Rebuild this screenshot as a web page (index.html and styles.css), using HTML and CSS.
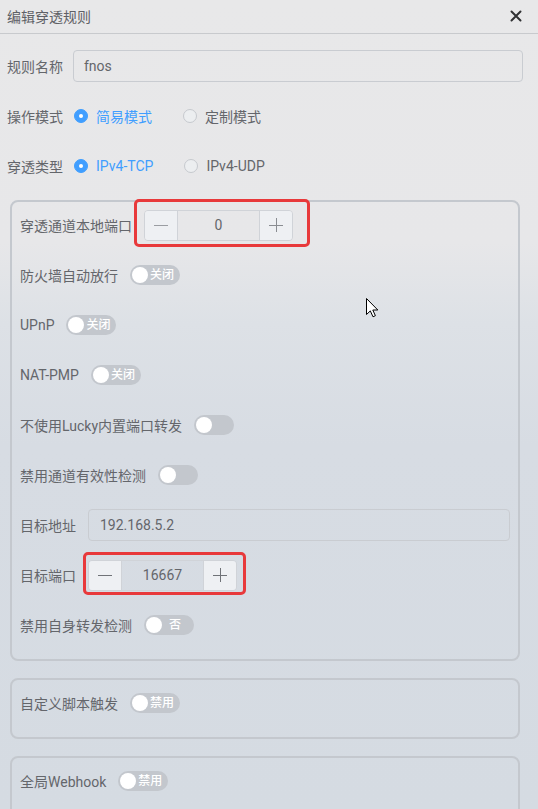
FILE: index.html
```html
<!DOCTYPE html>
<html lang="zh-CN">
<head>
<meta charset="utf-8">
<title>编辑穿透规则</title>
<link rel="stylesheet" href="styles.css">
</head>
<body>
<div class="dialog">
  <header class="hd">
    <span class="title">编辑穿透规则</span>
    <span class="close"><svg width="12" height="12" viewBox="0 0 12 12"><path d="M1.5 1.5L10.5 10.5M10.5 1.5L1.5 10.5" stroke="#303133" stroke-width="2" stroke-linecap="round"/></svg></span>
  </header>
  <div class="body">
    <div class="row top">
      <span class="lbl">规则名称</span>
      <div class="input wide">fnos</div>
    </div>
    <div class="row top">
      <span class="lbl">操作模式</span>
      <span class="radio on"><i></i>简易模式</span>
      <span class="radio"><i></i>定制模式</span>
    </div>
    <div class="row top">
      <span class="lbl">穿透类型</span>
      <span class="radio on"><i></i>IPv4-TCP</span>
      <span class="radio"><i></i>IPv4-UDP</span>
    </div>

    <div class="panel">
      <div class="row">
        <span class="lbl">穿透通道本地端口</span>
        <div class="stepper mark1">
          <span class="btn"><svg width="14" height="14" viewBox="0 0 14 14"><path d="M0 7.5H14" stroke="#9a9da2" stroke-width="1"/></svg></span><span class="val">0</span><span class="btn"><svg width="14" height="14" viewBox="0 0 14 14"><path d="M0 7.5H14M7.5 0V14" stroke="#8a8d92" stroke-width="1"/></svg></span>
        </div>
      </div>
      <div class="row">
        <span class="lbl">防火墙自动放行</span>
        <span class="switch txt"><b></b><em>关闭</em></span>
      </div>
      <div class="row">
        <span class="lbl">UPnP</span>
        <span class="switch txt"><b></b><em>关闭</em></span>
      </div>
      <div class="row">
        <span class="lbl">NAT-PMP</span>
        <span class="switch txt"><b></b><em>关闭</em></span>
      </div>
      <div class="row">
        <span class="lbl">不使用Lucky内置端口转发</span>
        <span class="switch"><b></b></span>
      </div>
      <div class="row">
        <span class="lbl">禁用通道有效性检测</span>
        <span class="switch"><b></b></span>
      </div>
      <div class="row">
        <span class="lbl">目标地址</span>
        <div class="input wide addr">192.168.5.2</div>
      </div>
      <div class="row">
        <span class="lbl">目标端口</span>
        <div class="stepper mark2">
          <span class="btn"><svg width="14" height="14" viewBox="0 0 14 14"><path d="M0 7.5H14" stroke="#6f7277" stroke-width="1"/></svg></span><span class="val">16667</span><span class="btn"><svg width="14" height="14" viewBox="0 0 14 14"><path d="M0 7.5H14M7.5 0V14" stroke="#6f7277" stroke-width="1"/></svg></span>
        </div>
      </div>
      <div class="row">
        <span class="lbl">禁用自身转发检测</span>
        <span class="switch txt"><b></b><em class="c">否</em></span>
      </div>
    </div>

    <div class="panel">
      <div class="row">
        <span class="lbl">自定义脚本触发</span>
        <span class="switch txt"><b></b><em>禁用</em></span>
      </div>
    </div>

    <div class="panel">
      <div class="row">
        <span class="lbl">全局Webhook</span>
        <span class="switch txt"><b></b><em>禁用</em></span>
      </div>
    </div>
  </div>
</div>
<svg class="cursor" width="13" height="20" viewBox="0 0 13 20"><path d="M0.5 0.5V16.5L4.3 12.9L7 18.8L9.4 17.7L6.8 12H11.8Z" fill="#fff" stroke="#000" stroke-width="1" stroke-linejoin="miter"/></svg>
</body>
</html>
```

FILE: styles.css
```css
* { box-sizing: border-box; }
html, body { margin: 0; padding: 0; }
body {
  width: 538px;
  height: 809px;
  overflow: hidden;
  font-family: Roboto, "Noto Sans CJK SC", sans-serif;
  font-size: 14px;
  color: #64666b;
  background: linear-gradient(180deg, #e8e8e9 0%, #e7e7e9 30%, #dde1e6 40%, #d7dce3 55%, #d5dbe2 100%);
  position: relative;
}
.dialog { width: 538px; }
.hd {
  height: 34px;
  border-bottom: 1px solid #c8cacd;
  display: flex;
  align-items: center;
  justify-content: space-between;
  padding: 0 16px 1px 7px;
}
.title { font-size: 14px; color: #5f6166; }
.close { display: flex; width: 12px; height: 12px; }
.body { padding: 16px 15px 0 7px; }
.row {
  height: 32px;
  margin-bottom: 18px;
  display: flex;
  align-items: center;
}
.lbl { margin-right: 12px; white-space: nowrap; }
.row.top .lbl { margin-right: 10px; }
.input {
  height: 32px;
  border: 1px solid #c9ccd1;
  border-radius: 4px;
  line-height: 30px;
  padding-left: 10px;
  color: #64666b;
}
.input.wide { flex: 1; }
.input.addr { padding-left: 11px; }
.radio {
  display: flex;
  align-items: center;
  margin-right: 30px;
  color: #64666b;
  margin-left: 1px;
}
.radio i {
  width: 14px;
  height: 14px;
  border-radius: 50%;
  border: 1px solid #c6c9ce;
  background: #eceef0;
  margin-right: 8px;
  position: relative;
}
.radio.on { color: #409eff; }
.radio.on i { background: #409eff; border-color: #409eff; }
.radio.on i::after {
  content: "";
  position: absolute;
  width: 4px;
  height: 4px;
  border-radius: 50%;
  background: #fff;
  left: 4px;
  top: 4px;
}
.panel {
  border: 2px solid #c4c8ce;
  border-radius: 8px;
  margin: 0 3px 17px 3px;
  padding: 7px 8px 0 8px;
}
.stepper {
  position: relative;
  width: 149px;
  height: 31px;
  border: 1px solid #d0d3d8;
  border-radius: 4px;
  display: flex;
}
.stepper .btn {
  width: 33px;
  display: flex;
  align-items: center;
  justify-content: center;
  background: #eef0f3;
}
.stepper .btn:first-child { border-right: 1px solid #d0d3d8; border-radius: 3px 0 0 3px; }
.stepper .btn:last-child { border-left: 1px solid #d0d3d8; border-radius: 0 3px 3px 0; }
.stepper .val {
  flex: 1;
  text-align: center;
  line-height: 29px;
  color: #64666b;
}
.mark1::after, .mark2::after {
  content: "";
  position: absolute;
  border: 3px solid #e8393b;
  border-radius: 5px;
}
.mark1::after { left: -11px; right: -18px; top: -12px; bottom: -7px; }
.mark2::after { left: -6px; right: -10px; top: -9px; bottom: -5px; }
.switch {
  position: relative;
  width: 40px;
  height: 20px;
  border-radius: 10px;
  background: #c3c7cd;
  display: inline-flex;
  align-items: center;
}
.switch.txt { width: 50px; }
.switch b {
  position: absolute;
  left: 2px;
  top: 2px;
  width: 16px;
  height: 16px;
  border-radius: 50%;
  background: #fff;
}
.switch em {
  font-style: normal;
  font-size: 12px;
  color: #fff;
  position: absolute;
  left: 20px;
  top: 1px;
  line-height: 18px;
  font-weight: 500;
}
.switch em.c { left: 25px; }
.cursor { position: absolute; left: 366px; top: 298px; }
```
